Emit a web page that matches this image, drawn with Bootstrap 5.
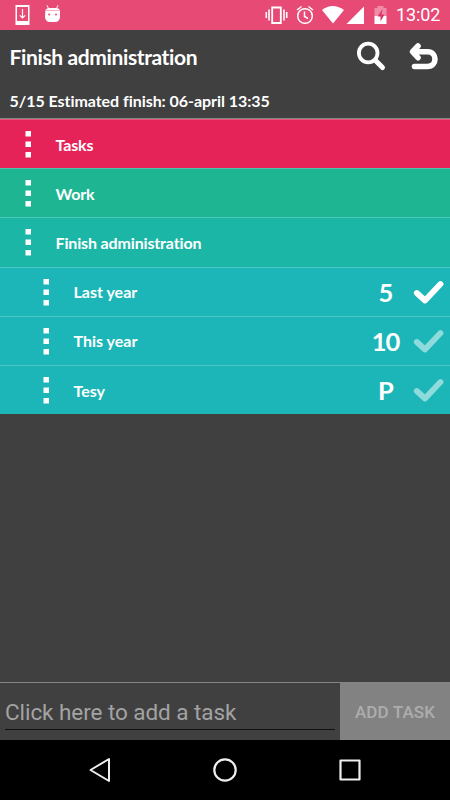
<!DOCTYPE html>
<html lang="en">
<head>
<meta charset="utf-8">
<meta name="viewport" content="width=device-width, initial-scale=1">
<title>Finish administration</title>
<link href="https://cdn.jsdelivr.net/npm/bootstrap@5.3.0/dist/css/bootstrap.min.css" rel="stylesheet">
<style>
body { background: #404040; font-family: Lato, "Open Sans", sans-serif; height: 800px; overflow: hidden; line-height: 1; }
svg { display: block; flex: none; }
.status-bar { height: 30px; background: #e64a75; font-family: Roboto, sans-serif; }
.clock { width: 54px; font-size: 18px; letter-spacing: -.1px; }
.app-head { height: 88px; padding-left: 9.6px; }
.title-row { height: 54px; }
.app-title { font-size: 21px; font-weight: 700; letter-spacing: -.38px; padding-bottom: 2px; }
.app-info { font-size: 16px; font-weight: 700; letter-spacing: -.05px; margin-top: 9px; }
.task-list { border-top: 1px solid #858585; }
.task-row { height: 49.2px; border-top: 1px solid rgba(255,255,255,.22); font-size: 16px; font-weight: 700; padding-left: 24.5px; }
.task-row.sub { padding-left: 42.5px; }
.task-row span { margin-left: 24px; padding-top: 2px; letter-spacing: -.15px; }
.task-row.sub span { padding-top: 1px; letter-spacing: 0; }
.c-root { background: #e52358; }
.c-work { background: #1eb592; }
.c-fin { background: #1cb6a6; }
.sub { background: #1cb6b8; }
.task-row .points { width: 54px; margin-left: auto; padding-right: 1px; padding-top: 2px; font-size: 25.5px; letter-spacing: -1px; }
.add-bar { height: 58px; border-top: 1px solid #858585; font-family: Roboto, sans-serif; }
.add-field { width: 330px; height: 47px; padding-top: 13px; color: #a3a3a3; font-size: 22.5px; letter-spacing: -.06px; border-bottom: 1px solid #101010; margin-left: 5px; margin-right: 5px; }
.add-btn { width: 110px; padding: 3px 0 0; background: #828282; color: #adadad; font-size: 17px; font-weight: 500; font-family: Roboto, sans-serif; letter-spacing: .1px; }
.nav-keys { height: 60px; background: #000; padding-left: 88px; gap: 101px; }
</style>
<script src="https://cdn.jsdelivr.net/npm/bootstrap@5.3.0/dist/js/bootstrap.bundle.min.js"></script>
</head>
<body class="d-flex flex-column text-white">
<div class="status-bar d-flex align-items-center flex-shrink-0">
  <svg width="75" height="30" fill="#fff"><path fill-rule="evenodd" d="M15.500 5h14v20h-14zM17 7v14h11V7z"/><path d="M22.500 9v9M19.800 15.300l2.700 2.700 2.700-2.700" stroke="#fff" stroke-width="1.200" fill="none"/><path d="M48.500 8.500 47 5.300M56.500 8.500 58 5.300" stroke="#fff" fill="none"/><path d="M45.300 11.500q.2-3.500 4-3.500h7q3.600 0 3.700 3.500v5.500q-.5 5-5 5h-5q-4.500 0-5-5z"/><path d="M46 10.500h13.500" stroke="#f5b0c5"/><circle cx="49.200" cy="14.500" r="1" fill="#e64a75"/><circle cx="56" cy="14.500" r="1" fill="#e64a75"/></svg>
  <svg class="ms-auto" width="132" height="30" fill="none" stroke="#fff"><path d="M8.200 7.500h8.600v15.500H8.200z" stroke-width="1.800"/><path d="M5 9.500v11M20 9.500v11M2.300 12v6M22.700 12v6" stroke-width="1.600"/><circle cx="41" cy="16" r="7.300" stroke-width="1.500"/><path d="M40.500 11.500v5l3.500 2M33 10l4.500-3.500M49 10l-4.500-3.500" stroke-width="1.500"/><path d="M58 10q10.500-8 22 0l-11 13.500z" fill="#fff" stroke="none"/><path d="M82.500 24 100 6.500V24z" fill="#fff" stroke="none"/><path d="M110.500 8h3V6h6v2h3v9h-12z" fill="#f08ba8" stroke="none"/><path d="M110.500 16h12v8h-12z" fill="#fff" stroke="none"/><path d="m118.500 9-5 7.500h3v5l4-7h-3z" fill="#d83664" stroke="none"/></svg>
  <div class="clock">13:02</div>
</div>
<header class="app-head flex-shrink-0 d-flex flex-column">
  <div class="title-row d-flex align-items-center">
    <div class="app-title">Finish administration</div>
    <svg class="ms-auto" width="100" height="54" fill="none" stroke="#fff" stroke-linecap="round" stroke-linejoin="round"><circle cx="18.200" cy="23" r="9.300" stroke-width="3.800"/><path d="m26 31 6.500 6.500" stroke-width="5"/><path d="M68 16l-5.500 5.700 5.500 6M64 21.700h13.500c10 0 10 14.800 0 14.800H64.500" stroke-width="5.600"/></svg>
  </div>
  <div class="app-info">5/15 Estimated finish: 06-april 13:35</div>
</header>
<main class="task-list flex-grow-1">
  <div class="task-row c-root d-flex align-items-center"><svg width="7" height="28" fill="#fff"><path d="M.5 1h5.500v5.500H.5zM.5 11.500h5.500V17H.5zM.5 22h5.500v5.500H.5z"/></svg><span>Tasks</span></div>
  <div class="task-row c-work d-flex align-items-center"><svg width="7" height="28" fill="#fff"><path d="M.5 1h5.500v5.500H.5zM.5 11.500h5.500V17H.5zM.5 22h5.500v5.500H.5z"/></svg><span>Work</span></div>
  <div class="task-row c-fin d-flex align-items-center"><svg width="7" height="28" fill="#fff"><path d="M.5 1h5.500v5.500H.5zM.5 11.500h5.500V17H.5zM.5 22h5.500v5.500H.5z"/></svg><span>Finish administration</span></div>
  <div class="task-row sub d-flex align-items-center"><svg width="7" height="28" fill="#fff"><path d="M.5 1h5.500v5.500H.5zM.5 11.500h5.500V17H.5zM.5 22h5.500v5.500H.5z"/></svg><span>Last year</span><div class="points text-center">5</div><svg width="37" height="30" fill="none" stroke="#fff" stroke-width="5.800" stroke-linecap="round" stroke-linejoin="round"><path d="m3.800 16 8.200 7.500L27.500 7"/></svg></div>
  <div class="task-row sub d-flex align-items-center"><svg width="7" height="28" fill="#fff"><path d="M.5 1h5.500v5.500H.5zM.5 11.500h5.500V17H.5zM.5 22h5.500v5.500H.5z"/></svg><span>This year</span><div class="points text-center">10</div><svg width="37" height="30" fill="none" stroke="#8edbdc" stroke-width="5.800" stroke-linecap="round" stroke-linejoin="round"><path d="m3.800 16 8.200 7.500L27.500 7"/></svg></div>
  <div class="task-row sub d-flex align-items-center"><svg width="7" height="28" fill="#fff"><path d="M.5 1h5.500v5.500H.5zM.5 11.500h5.500V17H.5zM.5 22h5.500v5.500H.5z"/></svg><span>Tesy</span><div class="points text-center">P</div><svg width="37" height="30" fill="none" stroke="#8edbdc" stroke-width="5.800" stroke-linecap="round" stroke-linejoin="round"><path d="m3.800 16 8.200 7.500L27.500 7"/></svg></div>
</main>
<div class="add-bar d-flex flex-shrink-0">
  <div class="add-field d-flex align-items-center">Click here to add a task</div>
  <button class="add-btn btn rounded-0 border-0 flex-shrink-0">ADD TASK</button>
</div>
<nav class="nav-keys d-flex align-items-center flex-shrink-0">
  <svg width="24" height="26" fill="none" stroke="#eee" stroke-width="2" stroke-linejoin="round"><path d="M21 2v22L2.500 13z"/></svg>
  <svg width="24" height="24" fill="none" stroke="#eee" stroke-width="2.200"><circle cx="12" cy="12" r="10.700"/></svg>
  <svg width="24" height="24" fill="none" stroke="#eee" stroke-width="2.200" stroke-linejoin="round"><path d="M2.500 2.500h19v19h-19z"/></svg>
</nav>
</body>
</html>
